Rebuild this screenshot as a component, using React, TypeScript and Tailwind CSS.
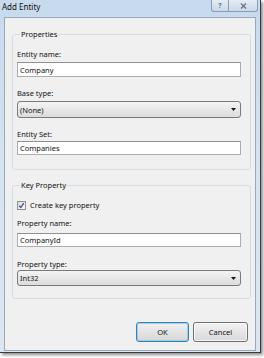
import React from "react";

function TextBox({ value, h }: { value: string; h: string }) {
  return (
    <div
      className={`w-[224px] ${h} bg-white border border-[#abadb3] border-t-[#8e9198] flex items-center pl-[2px] text-[#111]`}
    >
      {value}
    </div>
  );
}

function Combo({ value, h }: { value: string; h: string }) {
  return (
    <div
      className={`w-[224px] ${h} rounded-[3px] border border-[#7a7a7a] bg-gradient-to-b from-[#f4f4f4] to-[#dcdcdc] flex items-center justify-between pl-[2px] pr-[4px] text-[#111]`}
    >
      <span>{value}</span>
      <svg width="5" height="3" viewBox="0 0 5 3">
        <path d="M0 0 H5 L2.5 3 Z" fill="#111" />
      </svg>
    </div>
  );
}

function Label({ text, mt }: { text: string; mt: string }) {
  return <div className={`h-[10px] leading-[10px] ${mt} text-[#111]`}>{text}</div>;
}

export default function App() {
  return (
    <div className="w-[264px] h-[358px] bg-white font-['Noto_Sans',sans-serif] text-[7.5px] leading-[10px]">
      <div className="w-[261px] h-[353px] bg-gradient-to-b from-[#c7daee] via-[#d6e3f1] to-[#dbe6f2] border-r border-b border-[#3a3a3a] shadow-[2px_2px_3px_rgba(0,0,0,0.45)] flex flex-col">
        {/* title bar */}
        <div className="h-[17px] flex items-start justify-between">
          <span className="pl-[2px] pt-[2px] text-[8px] leading-[10px] text-[#111]">Add Entity</span>
          <div className="flex mr-[2px]">
            <div className="w-[18px] h-[12px] border border-t-0 border-[#8a9cb3] rounded-bl-[3px] bg-gradient-to-b from-[#e4edf7] to-[#cad8e9] flex items-center justify-center text-[7px] font-bold text-[#6b7480]">
              ?
            </div>
            <div className="w-[29px] h-[12px] border border-t-0 border-l-0 border-[#8a9cb3] rounded-br-[3px] bg-gradient-to-b from-[#e4edf7] to-[#cad8e9] flex items-center justify-center">
              <svg width="7" height="6" viewBox="0 0 7 6">
                <path d="M1 0.5 L6 5.5 M6 0.5 L1 5.5" stroke="#6b7480" strokeWidth="1.4" />
              </svg>
            </div>
          </div>
        </div>
        {/* client area */}
        <div className="flex-1 ml-[4px] mr-[4px] mb-[1px] bg-[#f0f0f0] border border-[#9aa9ba] pl-[7px] pt-[11px] flex flex-col">
          <fieldset className="w-[239px] border border-[#d5dce3] rounded-[3px] px-[4px] pb-[14px]">
            <legend className="ml-[3px] px-[1px] h-[10px] leading-[10px] text-[#111]">Properties</legend>
            <Label text="Entity name:" mt="mt-[10px]" />
            <div className="mt-[3px]">
              <TextBox value="Company" h="h-[15px]" />
            </div>
            <Label text="Base type:" mt="mt-[11px]" />
            <div className="mt-[3px]">
              <Combo value="(None)" h="h-[17px]" />
            </div>
            <Label text="Entity Set:" mt="mt-[11px]" />
            <div className="mt-[2px]">
              <TextBox value="Companies" h="h-[14px]" />
            </div>
          </fieldset>

          <fieldset className="mt-[10px] w-[239px] border border-[#d5dce3] rounded-[3px] px-[4px] pb-[12px]">
            <legend className="ml-[3px] px-[1px] h-[10px] leading-[10px] text-[#111]">Key Property</legend>
            <div className="mt-[10px] h-[10px] flex items-center gap-[4px]">
              <div className="w-[9px] h-[9px] border border-[#8f8f8f] bg-gradient-to-br from-[#dcdcdc] to-[#fbfbfb] flex items-center justify-center">
                <svg width="7" height="7" viewBox="0 0 7 7">
                  <path d="M1.2 3.8 L2.8 5.5 L5.8 1.2" stroke="#3b4f8a" strokeWidth="1.3" fill="none" />
                </svg>
              </div>
              <span className="text-[#111]">Create key property</span>
            </div>
            <Label text="Property name:" mt="mt-[8px]" />
            <div className="mt-[5px]">
              <TextBox value="CompanyId" h="h-[14px]" />
            </div>
            <Label text="Property type:" mt="mt-[12px]" />
            <div className="mt-[1px]">
              <Combo value="Int32" h="h-[16px]" />
            </div>
          </fieldset>

          <div className="mt-[23px] w-[239px] flex justify-end gap-[4px] pr-[3px]">
            <div className="w-[53px] h-[20px] rounded-[3px] border border-[#3c7fb1] bg-gradient-to-b from-[#f0f0f0] to-[#d8d8d8] shadow-[inset_0_0_0_1px_rgba(120,200,240,0.7)] flex items-center justify-center text-[#111]">
              OK
            </div>
            <div className="w-[55px] h-[20px] rounded-[3px] border border-[#707070] bg-gradient-to-b from-[#f2f2f2] to-[#d9d9d9] shadow-[inset_0_0_0_1px_rgba(255,255,255,0.7)] flex items-center justify-center text-[#111]">
              Cancel
            </div>
          </div>
        </div>
      </div>
    </div>
  );
}
